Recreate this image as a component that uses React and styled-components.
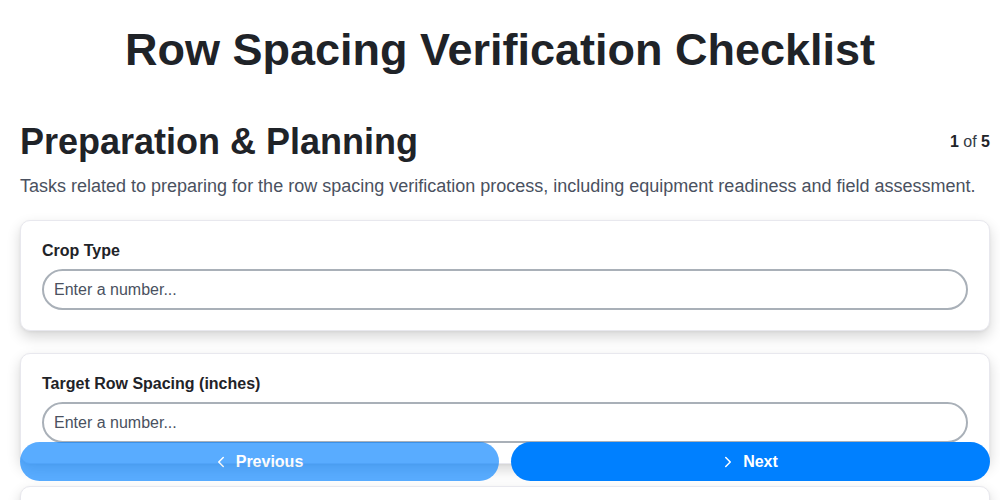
import styled, { createGlobalStyle } from "styled-components";
import { ChevronLeft, ChevronRight } from "lucide-react";

const fields = [
  { id: "crop", label: "Crop Type" },
  { id: "target", label: "Target Row Spacing (inches)" },
  { id: "measured", label: "Measured Row Spacing (inches)" },
];

const App = () => {
  return (
    <Page>
      <GlobalStyle />
      <Title>Row Spacing Verification Checklist</Title>
      <Step>
        <SectionHead>
          <SectionTitle>Preparation &amp; Planning</SectionTitle>
          <Progress>
            <b>1</b> of <b>5</b>
          </Progress>
        </SectionHead>
        <Description>
          Tasks related to preparing for the row spacing verification process,
          including equipment readiness and field assessment.
        </Description>
        <CardList>
          {fields.map((f) => (
            <Card key={f.id}>
              <Label htmlFor={f.id}>{f.label}</Label>
              <Input id={f.id} type="text" placeholder="Enter a number..." />
            </Card>
          ))}
        </CardList>
      </Step>
      <Nav>
        <NavButton $faded>
          <ChevronLeft size={18} strokeWidth={2} />
          Previous
        </NavButton>
        <NavButton>
          <ChevronRight size={18} strokeWidth={2} />
          Next
        </NavButton>
      </Nav>
    </Page>
  );
};

export default App;

const GlobalStyle = createGlobalStyle`
  body {
    margin: 0;
    background: #ffffff;
    font-family: "Liberation Sans", Arial, sans-serif;
    color: #1f2328;
    overflow: hidden;
  }
`;

const Page = styled.main`
  padding: 0 10px 120px;
`;

const Title = styled.h1`
  margin: 0;
  padding: 24px 0 0;
  height: 76px;
  text-align: center;
  font-size: 45px;
  line-height: 52px;
  font-weight: 700;
  color: #1f2328;
`;

const Step = styled.div`
  padding-left: 10px;
`;

const SectionHead = styled.div`
  display: flex;
  align-items: center;
  justify-content: space-between;
  margin-top: 20px;
`;

const SectionTitle = styled.h2`
  margin: 0;
  font-size: 36px;
  line-height: 44px;
  font-weight: 700;
  color: #1f2328;
`;

const Progress = styled.div`
  font-size: 16px;
  color: #333a44;

  b {
    color: #1f2328;
  }
`;

const Description = styled.p`
  margin: 9px 0 21px;
  font-size: 18px;
  line-height: 26px;
  color: #4a5160;
`;

const CardList = styled.div`
  display: flex;
  flex-direction: column;
  gap: 22px;
`;

const Card = styled.section`
  background: #ffffff;
  border: 1px solid #e8e8ee;
  border-radius: 10px;
  padding: 20px 21px;
  box-shadow: 0 6px 14px rgba(0, 0, 0, 0.16), 0 1px 3px rgba(0, 0, 0, 0.05);
`;

const Label = styled.label`
  display: block;
  font-size: 16px;
  line-height: 20px;
  font-weight: 700;
  color: #1f2328;
  margin-bottom: 8px;
`;

const Input = styled.input`
  display: block;
  box-sizing: border-box;
  width: 100%;
  height: 41px;
  padding: 0 10px;
  border: 2px solid #a9b0b8;
  border-radius: 999px;
  font-family: "Liberation Sans", Arial, sans-serif;
  font-size: 16px;
  color: #1f2328;
  background: #ffffff;
  outline: none;

  &::placeholder {
    color: #4a5160;
    opacity: 1;
  }
`;

const Nav = styled.nav`
  position: fixed;
  left: 20px;
  right: 10px;
  bottom: 19px;
  display: grid;
  grid-template-columns: 1fr 1fr;
  gap: 12px;
`;

const NavButton = styled.button`
  display: flex;
  align-items: center;
  justify-content: center;
  gap: 6px;
  height: 39px;
  padding: 0;
  border: none;
  border-radius: 999px;
  background: #0080ff;
  color: #ffffff;
  font-family: "Liberation Sans", Arial, sans-serif;
  font-size: 16px;
  font-weight: 700;
  cursor: pointer;
  opacity: ${(p) => (p.$faded ? 0.65 : 1)};

  svg {
    margin-left: -4px;
  }
`;
